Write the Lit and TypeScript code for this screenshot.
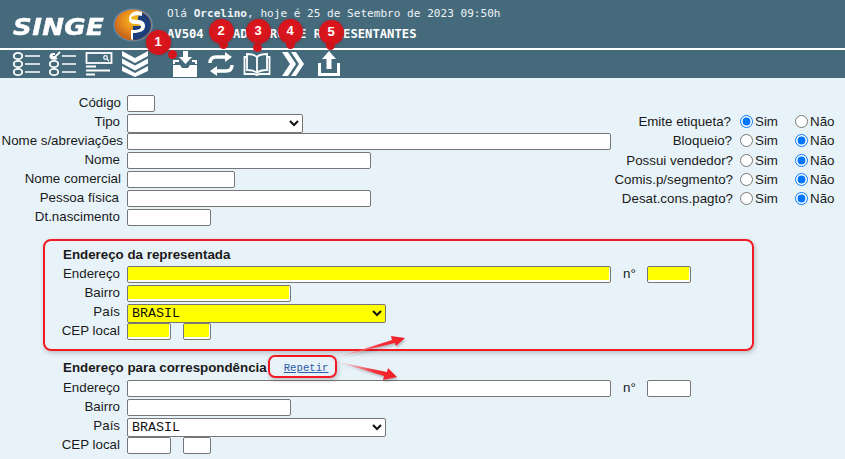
import { LitElement, html, css, svg } from "lit";
import { customElement } from "lit/decorators.js";

const ICONS = [
  svg`<svg width="30" height="26" viewBox="0 0 30 26" fill="none" stroke="#fff"><g stroke-width="1.800"><ellipse cx="6" cy="5" rx="4.200" ry="3.200"/><ellipse cx="6" cy="13" rx="4.200" ry="3.200"/><ellipse cx="6" cy="21" rx="4.200" ry="3.200"/></g><path d="M13 5h15M13 13h15M13 21h15" stroke-width="1.400"/></svg>`,
  svg`<svg width="30" height="26" viewBox="0 0 30 26" fill="none" stroke="#fff"><g stroke-width="1.800"><path d="M3 4l3 3 6-6M9 7c-1 1-5 1-6 0s-1-3 1-4h3"/><ellipse cx="6" cy="13" rx="4.200" ry="3.200"/><ellipse cx="6" cy="21" rx="4.200" ry="3.200"/></g><path d="M14 5h14M14 13h14M14 21h14" stroke-width="1.400"/></svg>`,
  svg`<svg width="28" height="26" viewBox="0 0 28 26" fill="none" stroke="#fff"><g stroke-width="1.800"><rect x="1.500" y="2" width="25" height="10"/><path d="M1 15.500h10M1 19.500h24M1 23.500h9"/></g><circle cx="20.500" cy="6.500" r="1.800" stroke-width="1.200"/><path d="M22 8l2 2" stroke-width="1.200"/></svg>`,
  svg`<svg width="28" height="28" viewBox="0 0 28 28" fill="#fff"><path d="M1 1l13 7 13-7v5L14 13 1 6zM1 8.500l13 7 13-7v5l-13 7-13-7zM1 16l13 7 13-7v5l-13 6-13-6z"/></svg>`,
  svg`<svg width="26" height="27" viewBox="0 0 26 27" fill="#fff"><path d="M11 0h5v6h4l-6.500 7L7 6h4z"/><path d="M1 9h6v2H3v2H1z"/><path d="M20 9h5v4h-2v-2h-3z"/><path d="M1 14h7l2 3h6l2-3h7v12H1z"/></svg>`,
  svg`<svg width="26" height="24" viewBox="0 0 26 24" fill="none" stroke="#fff" stroke-width="3.400"><path d="M2 11c0-4 2-6 6-6h10"/><path d="M24 13c0 4-2 6-6 6H8"/><path d="M17 0l7 5-7 5z M9 14l-7 5 7 5z" fill="#fff" stroke="none"/></svg>`,
  svg`<svg width="28" height="24" viewBox="0 0 28 24" fill="none" stroke="#fff" stroke-width="1.800"><path d="M14 5c-2-2-5-3-10-3v16c5 0 8 1 10 3 2-2 5-3 10-3V2c-5 0-8 1-10 3zM14 5v16"/><path d="M4 5H1.500v17H11l3 1 3-1h9.500V5H24"/></svg>`,
  svg`<svg width="24" height="26" viewBox="0 0 24 26" fill="#fff"><path d="M1 1h6l8 12-8 12H1l8-12zM10 1h5l8 12-8 12h-5l8-12z"/></svg>`,
  svg`<svg width="26" height="26" viewBox="0 0 26 26" fill="#fff"><path d="M13 0l7 8h-4.500v10h-5V8H6z"/><path d="M3.500 12v11.500h19V12" fill="none" stroke="#fff" stroke-width="3"/></svg>`,
];

type Row = { label: string; end?: number; w?: number };

const TOP: Row[] = [
  { label: "Código", end: 2, w: 28 },
  { label: "Tipo", end: 3 },
  { label: "Nome s/abreviações", end: 0, w: 484 },
  { label: "Nome", end: 3, w: 244 },
  { label: "Nome comercial", end: 2, w: 108 },
  { label: "Pessoa física", end: 4, w: 244 },
  { label: "Dt.nascimento", end: 3, w: 84 },
];

const OPTS = [
  { label: "Emite etiqueta?", end: 2, sim: true },
  { label: "Bloqueio?", end: 1, sim: false },
  { label: "Possui vendedor?", end: 0, sim: false },
  { label: "Comis.p/segmento?", end: 0, sim: false },
  { label: "Desat.cons.pagto?", end: 0, sim: false },
];

const MARKS = [
  { n: 1, x: 158, y: 42, dx: 172, dy: 54 },
  { n: 2, x: 221, y: 31, dx: 223, dy: 44 },
  { n: 3, x: 258, y: 31, dx: 257, dy: 47 },
  { n: 4, x: 290, y: 31, dx: 290, dy: 44 },
  { n: 5, x: 331, y: 32, dx: 330, dy: 45 },
];

@customElement("app-root")
export class AppRoot extends LitElement {
  static styles = css`
    :host {
      display: block;
      position: relative;
      width: 845px;
      height: 459px;
      overflow: hidden;
      background: #e8f3f9;
      color: #1a1a1a;
      font: 13.33px "Liberation Sans", Arial, sans-serif;
    }
    .band {
      height: 48px;
      background: #456a7c;
      display: flex;
      align-items: flex-start;
    }
    .brand {
      font: italic 700 26px "DejaVu Sans", sans-serif;
      color: #fff;
      width: 100px;
      margin: 11px 0 0 13px;
      line-height: 32px;
      letter-spacing: 0.4px;
      transform: scaleY(0.9);
      -webkit-text-stroke: 0.5px #fff;
    }
    .globe { margin: 7px 0 0 -1px; flex: none; }
    .msgs {
      margin: 4px 0 0 13px;
      font-family: "DejaVu Sans Mono", monospace;
      color: #fff;
      white-space: nowrap;
    }
    .hello { font-size: 11.08px; line-height: 20px; height: 20px; color: #eef4f7; }
    .title { font-size: 12.2px; line-height: 20px; font-weight: 700; }
    .tools {
      background: #456a7c;
      border-top: 2px solid #fff;
      height: 28px;
      display: flex;
      padding-left: 9px;
    }
    .tool {
      width: 36px;
      height: 28px;
      display: flex;
      justify-content: center;
      align-items: center;
      flex: none;
    }
    .tool.sep { margin-left: 14px; }
    main { padding-top: 17px; }
    .top { display: flex; height: 134px; }
    .left { width: 611px; flex: none; }
    .row { display: flex; height: 19px; align-items: flex-start; }
    .lab {
      width: 123px;
      box-sizing: border-box;
      flex: none;
      text-align: right;
      white-space: nowrap;
      line-height: 15px;
    }
    input[type="text"] {
      display: block;
      box-sizing: border-box;
      height: 17px;
      margin: 0;
      padding: 0;
      background: #fff;
      border: 1px solid #767676;
      border-radius: 2px;
    }
    select {
      display: block;
      box-sizing: border-box;
      height: 19px;
      margin: 0;
      padding: 0;
      background-color: #fff;
      border: 1px solid #767676;
      border-radius: 2px;
      font: 13.33px "Liberation Mono", monospace;
      color: #111;
    }
    .row input.field, .row select.field { margin-left: 4px; }
    .row input.gapf { margin-left: 12px; }
    .tipo { width: 176px; }
    .pais { width: 259px; }
    input.req[type="text"] { background: #ff0; box-shadow: inset -1px -2px 0 #fff; }
    select.req { background-color: #ff0; }
    .right { padding-top: 17px; }
    .opt { display: flex; height: 19.25px; align-items: center; }
    .opt .lab { width: 122px; }
    .radio { display: flex; align-items: center; }
    .radio input { margin: 0 2px 0 7px; width: 13px; height: 13px; flex: none; }
    .radio.sim { width: 62px; }
    .radio.nao input { margin-left: 0; }
    .sec { padding-top: 18px; }
    .sec + .sec { padding-top: 17px; }
    .head {
      font-weight: 700;
      height: 19px;
      box-sizing: border-box;
      padding: 0 0 4px 63px;
      display: flex;
      align-items: center;
    }
    .sec + .sec .head { height: 21px; }
    .sec .row .lab { padding-right: 3px; }
    .num { margin-left: 12px; width: 24px; line-height: 15px; }
    .cep { display: flex; }
    .rep {
      margin-left: 17px;
      font: 400 10.67px "Liberation Mono", monospace;
      color: #2a5aa8;
      text-decoration: underline;
    }
    .ov {
      position: absolute;
      left: 0;
      top: 0;
      pointer-events: none;
      filter: drop-shadow(1px 2px 1px rgba(0, 0, 0, 0.22));
    }
    .mark {
      position: absolute;
      width: 25px;
      height: 25px;
      margin: -12.5px 0 0 -12.5px;
      border-radius: 50%;
      background: radial-gradient(circle at 50% 42%, #e01820 0%, #d4141b 60%, rgba(190, 16, 24, 0.88) 100%);
      box-shadow: 0 0 3px rgba(120, 10, 20, 0.45);
      color: #fff;
      text-align: center;
      font: 700 13px/24px "Liberation Sans", sans-serif;
    }
    .dot {
      position: absolute;
      width: 9px;
      height: 9px;
      margin: -4.5px 0 0 -4.5px;
      border-radius: 50%;
      background: #d4141b;
    }
    .box {
      position: absolute;
      box-sizing: border-box;
      border: 2px solid #f21b24;
      box-shadow: 1px 2px 5px rgba(0, 0, 0, 0.22);
    }
    .box.big { left: 43px; top: 239px; width: 711px; height: 112px; border-radius: 8px; }
    .box.small { left: 268px; top: 355px; width: 69px; height: 23px; border-radius: 7px; }
  `;

  private renderIcon(i: number) {
    return html`<div class="tool ${i === 4 ? "sep" : ""}">${ICONS[i]}</div>`;
  }

  private address(title: string, req: boolean, extra: unknown) {
    const r = req ? "req" : "";
    return html`
      <section class="sec">
        <div class="head">${title}${extra}</div>
        <div class="row">
          <span class="lab">Endereço</span>
          <input class="field ${r}" type="text" style="width:484px" />
          <span class="num">n°</span>
          <input class="${r}" type="text" style="width:44px" />
        </div>
        <div class="row">
          <span class="lab">Bairro</span>
          <input class="field ${r}" type="text" style="width:164px" />
        </div>
        <div class="row">
          <span class="lab">País</span>
          <select class="field pais ${r}"><option>BRASIL</option></select>
        </div>
        <div class="row cep">
          <span class="lab">CEP local</span>
          <input class="field ${r}" type="text" style="width:44px" />
          <input class="gapf ${r}" type="text" style="width:28px" />
        </div>
      </section>
    `;
  }

  render() {
    return html`
      <div class="band">
        <div class="brand">SINGE</div>
        <svg class="globe" width="42" height="36" viewBox="0 0 42 36">
          <defs>
            <radialGradient id="g" cx="0.55" cy="0.35" r="0.6">
              <stop offset="0" stop-color="#f4c21c" />
              <stop offset="0.6" stop-color="#e88a1c" />
              <stop offset="1" stop-color="#c4661c" />
            </radialGradient>
          </defs>
          <ellipse cx="21" cy="18" rx="20" ry="16.500" fill="#5c86b0" />
          <ellipse cx="21" cy="18" rx="18.500" ry="15.500" fill="url(#g)" />
          <path d="M29 5c6 2 10 7 10 13 0 8-8 15-17 15-1 0-1-1-1-1V19h8c4 0 2-6-3-6 0 0 0-7 3-8z" fill="#1c3f7c" />
          <path d="M30 5c-9-3-13 3-13 7s3 5 7 5c4 0 5 1 5 3s-3 3-7 3l-3 0 0 9 2 1v-7c7 0 12-2 12-7s-4-6-8-6-6-1-6-2c0-2 6-4 11-2z" fill="#fff" />
        </svg>
        <div class="msgs">
          <div class="hello">Olá <b>Orcelino</b>, hoje é 25 de Setembro de 2023 09:50h</div>
          <div class="title">AV504 - CADASTRO DE REPRESENTANTES</div>
        </div>
      </div>
      <nav class="tools">${ICONS.map((_, i) => this.renderIcon(i))}</nav>
      <main>
        <div class="top">
          <div class="left">
            ${TOP.map(
              (r) => html`<div class="row">
                <span class="lab" style="padding-right:${r.end}px">${r.label}</span>
                ${r.w
                  ? html`<input class="field" type="text" style="width:${r.w}px" />`
                  : html`<select class="field tipo"><option></option></select>`}
              </div>`
            )}
          </div>
          <div class="right">
            ${OPTS.map(
              (o, i) => html`<div class="opt">
                <span class="lab" style="padding-right:${o.end}px">${o.label}</span>
                <label class="radio sim"><input type="radio" name="o${i}" ?checked=${o.sim} />Sim</label>
                <label class="radio nao"><input type="radio" name="o${i}" ?checked=${!o.sim} />Não</label>
              </div>`
            )}
          </div>
        </div>
        ${this.address("Endereço da representada", true, "")}
        ${this.address("Endereço para correspondência", false, html`<a class="rep">Repetir</a>`)}
      </main>
      <div class="box big"></div>
      <div class="box small"></div>
      <svg class="ov" width="845" height="459" viewBox="0 0 845 459">
        <defs>
          <linearGradient id="a1" x1="0" x2="1">
            <stop offset="0" stop-color="#f8a0a4" stop-opacity="0.4" />
            <stop offset="0.6" stop-color="#f2343c" />
            <stop offset="1" stop-color="#f21b24" />
          </linearGradient>
        </defs>
        <path d="M338 357l54-17-1-4 14 2-9 8-1-3z" fill="url(#a1)" />
        <path d="M338 362l49 10 1-4 9 9-14 3 1-4z" fill="url(#a1)" />
      </svg>
      ${MARKS.map(
        (m) => html`<div class="dot" style="left:${m.dx}px;top:${m.dy}px"></div>
          <div class="mark" style="left:${m.x}px;top:${m.y}px">${m.n}</div>`
      )}
    `;
  }
}
